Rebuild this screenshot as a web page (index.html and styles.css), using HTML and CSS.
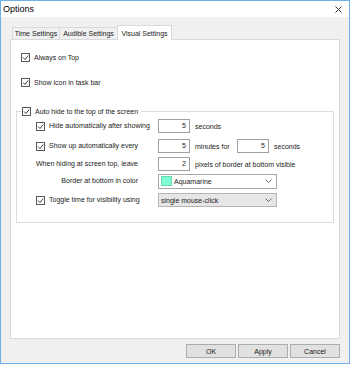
FILE: index.html
```html
<!DOCTYPE html>
<html lang="en">

<head>
    <meta charset="UTF-8">
    <title>Options</title>
    <link rel="stylesheet" href="styles.css">
</head>

<body>
    <div class="window">
        <div class="titlebar">
            <span class="title">Options</span>
            <svg class="close" viewBox="0 0 7 7"><path d="M0.5 0.5 L6.5 6.5 M6.5 0.5 L0.5 6.5" /></svg>
        </div>

        <div class="content">
            <div class="tabstrip">
                <div class="tab tab-time">Time Settings</div>
                <div class="tab tab-audible">Audible Settings</div>
                <div class="tab tab-visual active">Visual Settings</div>
            </div>

            <div class="panel">
                <div class="option first">
                    <span class="check"><svg viewBox="0 0 7 7"><path d="M1 3.5 L3 5.5 L6.2 1.5" /></svg></span>
                    Always on Top
                </div>
                <div class="option second">
                    <span class="check"><svg viewBox="0 0 7 7"><path d="M1 3.5 L3 5.5 L6.2 1.5" /></svg></span>
                    Show icon in task bar
                </div>

                <fieldset class="group">
                    <legend class="option">
                        <span class="check"><svg viewBox="0 0 7 7"><path d="M1 3.5 L3 5.5 L6.2 1.5" /></svg></span>
                        Auto hide to the top of the screen
                    </legend>

                    <div class="grid">
                        <div class="option">
                            <span class="check"><svg viewBox="0 0 7 7"><path d="M1 3.5 L3 5.5 L6.2 1.5" /></svg></span>
                            Hide automatically after showing
                        </div>
                        <div class="controls">
                            <span class="num">5</span>
                            <span>seconds</span>
                        </div>

                        <div class="option">
                            <span class="check"><svg viewBox="0 0 7 7"><path d="M1 3.5 L3 5.5 L6.2 1.5" /></svg></span>
                            Show up automatically every
                        </div>
                        <div class="controls">
                            <span class="num">5</span>
                            <span class="minutes">minutes for</span>
                            <span class="num">5</span>
                            <span>seconds</span>
                        </div>

                        <div class="label">When hiding at screen top, leave</div>
                        <div class="controls">
                            <span class="num">2</span>
                            <span>pixels of border at bottom visible</span>
                        </div>

                        <div class="label right">Border at bottom in color</div>
                        <div class="controls">
                            <div class="select">
                                <span class="swatch"></span>
                                <span class="select-text">Aquamarine</span>
                                <svg class="chevron" viewBox="0 0 7 4"><path d="M0.5 0.5 L3.5 3.5 L6.5 0.5" /></svg>
                            </div>
                        </div>

                        <div class="option">
                            <span class="check"><svg viewBox="0 0 7 7"><path d="M1 3.5 L3 5.5 L6.2 1.5" /></svg></span>
                            Toggle time for visibility using
                        </div>
                        <div class="controls">
                            <div class="select grey">
                                <span class="select-text">single mouse-click</span>
                                <svg class="chevron" viewBox="0 0 7 4"><path d="M0.5 0.5 L3.5 3.5 L6.5 0.5" /></svg>
                            </div>
                        </div>
                    </div>
                </fieldset>
            </div>

            <div class="buttons">
                <button>OK</button>
                <button>Apply</button>
                <button>Cancel</button>
            </div>
        </div>
    </div>
</body>

</html>
```

FILE: styles.css
```css
body {
    margin: 0;
    background-color: #ffffff;
    font-family: "Liberation Sans", Arial, sans-serif;
    font-size: 7px;
    color: #222222;
}

.window {
    width: 350px;
    height: 364px;
    box-sizing: border-box;
    border: 1px solid #70b1e7;
    background-color: #f0f0f0;
    display: flex;
    flex-direction: column;
}

.titlebar {
    height: 16px;
    flex: none;
    background-color: #ffffff;
    display: flex;
    align-items: center;
    justify-content: space-between;
    padding: 0 7px 0 2px;
}

.title {
    font-size: 9px;
    color: #000;
}

.close {
    width: 7px;
    height: 7px;
}

.close path {
    stroke: #333;
    stroke-width: 1;
    fill: none;
}

.content {
    padding: 8px 9px 0;
}

/* onglets */
.tabstrip {
    height: 15px;
    display: flex;
    align-items: flex-start;
    padding-left: 2px;
    margin-bottom: -1px;
    position: relative;
    z-index: 1;
}

.tab {
    box-sizing: border-box;
    height: 12px;
    margin-top: 2px;
    border: 1px solid #d9d9d9;
    border-bottom: none;
    background-color: #f0f0f0;
    text-align: center;
    line-height: 11px;
    white-space: nowrap;
}

.tab-time {
    width: 48px;
}

.tab-audible {
    width: 59px;
    margin-left: -1px;
}

.tab-visual {
    width: 55px;
    margin-left: -1px;
}

.tab.active {
    height: 15px;
    margin-top: 0;
    background-color: #ffffff;
    line-height: 15px;
}

.panel {
    box-sizing: border-box;
    height: 300px;
    border: 1px solid #d9d9d9;
    background-color: #ffffff;
    padding: 11px 5px 0;
}

.option {
    display: flex;
    align-items: center;
    height: 12px;
    white-space: nowrap;
}

.panel > .option {
    padding-left: 5px;
}

.second {
    margin-top: 13px;
}

.check {
    box-sizing: border-box;
    width: 9px;
    height: 9px;
    border: 1px solid #5a5a5a;
    background-color: #fff;
    margin-right: 4px;
    flex: none;
    display: flex;
}

.check svg {
    width: 7px;
    height: 7px;
}

.check path {
    stroke: #3a3a3a;
    stroke-width: 1;
    fill: none;
}

/* groupe */
.group {
    margin: 17px 0 0;
    border: 1px solid #dcdcdc;
    padding: 2px 4px 14px 19px;
}

.group legend {
    margin-left: -15px;
    padding: 0 3px 0 1px;
}

.grid {
    display: grid;
    grid-template-columns: 122px 1fr;
    grid-template-rows: 20px 18px 17px 19px 15px;
    align-items: start;
}

.grid .option,
.label {
    height: 14px;
    line-height: 14px;
    white-space: nowrap;
}

.label.right {
    text-align: right;
    padding-right: 20px;
}

.controls {
    display: flex;
    align-items: center;
    gap: 5px;
    height: 14px;
}

.num {
    box-sizing: border-box;
    width: 32px;
    height: 14px;
    border: 1px solid #a0a0a0;
    background-color: #fff;
    text-align: right;
    padding-right: 3px;
    line-height: 12px;
}

.minutes {
    width: 37px;
}

.select {
    box-sizing: border-box;
    width: 119px;
    height: 15px;
    flex: none;
    border: 1px solid #a9a9a9;
    background-color: #fff;
    display: flex;
    align-items: center;
    padding: 0 4px 0 2px;
}

.select.grey {
    height: 14px;
    background-color: #e6e6e6;
    border-color: #b5b5b5;
}

.swatch {
    width: 11px;
    height: 10px;
    background-color: #7fffd4;
    box-shadow: inset 0 0 0 1px #6ad9b6;
    margin-right: 2px;
}

.select-text {
    flex: 1;
}

.chevron {
    width: 7px;
    height: 4px;
}

.chevron path {
    stroke: #666;
    stroke-width: 1;
    fill: none;
}

.buttons {
    display: flex;
    justify-content: flex-end;
    gap: 2px;
    margin-top: 5px;
}

button {
    box-sizing: border-box;
    width: 50px;
    height: 14px;
    padding: 0;
    border: 1px solid #adadad;
    background-color: #e1e1e1;
    font-family: "Liberation Sans", Arial, sans-serif;
    font-size: 7px;
    color: #1a1a1a;
}
```
